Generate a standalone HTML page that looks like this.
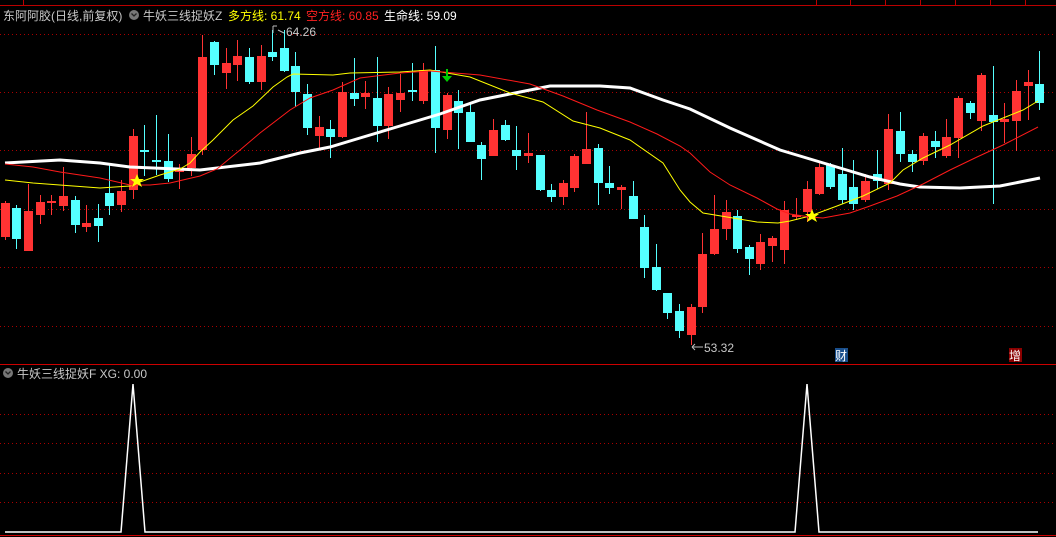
<!DOCTYPE html>
<html><head><meta charset="utf-8"><style>
html,body{margin:0;padding:0;background:#000;width:1056px;height:537px;overflow:hidden}
svg{display:block}
text{font-family:"Liberation Sans","Noto Sans CJK SC",sans-serif;font-size:12px}
</style></head><body>
<svg width="1056" height="537" viewBox="0 0 1056 537" xmlns="http://www.w3.org/2000/svg">
<rect width="1056" height="537" fill="#000"/>
<path d="M0 5.5H1056 M23.5 0V5 M816.5 0V5 M850.5 0V5 M885.5 0V5 M920.5 0V5 M955.5 0V5 M990.5 0V5 M1025.5 0V5" stroke="#b00" stroke-width="1"/>
<g stroke="#a00" stroke-width="1" stroke-dasharray="1 3">
<path d="M0 34.5H1056 M0 92.5H1056 M0 150.5H1056 M0 209.5H1056 M0 267.5H1056 M0 326.5H1056"/>
<path d="M0 414.5H1056 M0 443.5H1056 M0 473.5H1056 M0 502.5H1056"/>
</g>
<text x="3" y="20" fill="#c8c8c8">东阿阿胶(日线,前复权)</text>
<circle cx="134" cy="15" r="5" fill="#777"/>
<path d="M131.5 13.5l2.5 2.5 2.5-2.5" stroke="#222" fill="none" stroke-width="1.3"/>
<text x="143" y="20" fill="#c8c8c8">牛妖三线捉妖Z</text>
<text x="228" y="20" fill="#ffff00">多方线: 61.74</text>
<text x="306" y="20" fill="#ff2020">空方线: 60.85</text>
<text x="384" y="20" fill="#fff">生命线: 59.09</text>
<g fill="#ff3333">
<path stroke="#ff3333" stroke-width="1" d="M5.5 201V240 M28.5 184V251 M40.5 195V224 M51.5 195V215 M63.5 167V211 M86.5 205V232 M121.5 180V212 M133.5 129V199 M179.5 164V189 M191.5 137V176 M202.5 35V155 M226.5 48V89 M237.5 40V81 M261.5 45V90 M319.5 116V150 M342.5 82V138 M365.5 81V109 M388.5 87V139 M400.5 74V112 M423.5 63V104 M447.5 93V139 M493.5 119V156 M528.5 133V163 M563.5 180V205 M574.5 154V192 M586.5 112V164 M621.5 185V209 M691.5 304V345 M702.5 233V313 M714.5 195V255 M726.5 200V240 M760.5 234V270 M772.5 236V262 M784.5 201V264 M796.5 198V220 M807.5 181V222 M819.5 162V195 M865.5 174V202 M888.5 114V190 M923.5 133V165 M946.5 119V158 M958.5 96V158 M981.5 73V131 M1004.5 103V143 M1016.5 80V151 M1028.5 70V120"/>
<rect x="1" y="203" width="9" height="34"/><rect x="24" y="211" width="9" height="40"/><rect x="36" y="202" width="9" height="13"/><rect x="47" y="201" width="9" height="2"/><rect x="59" y="196" width="9" height="10"/><rect x="82" y="223" width="9" height="4"/><rect x="117" y="191" width="9" height="14"/><rect x="129" y="136" width="9" height="54"/><rect x="175" y="168" width="9" height="4"/><rect x="187" y="154" width="9" height="14"/><rect x="198" y="57" width="9" height="93"/><rect x="222" y="63" width="9" height="10"/><rect x="233" y="56" width="9" height="9"/><rect x="257" y="56" width="9" height="26"/><rect x="315" y="127" width="9" height="9"/><rect x="338" y="92" width="9" height="45"/><rect x="361" y="93" width="9" height="4"/><rect x="384" y="94" width="9" height="32"/><rect x="396" y="93" width="9" height="7"/><rect x="419" y="70" width="9" height="31"/><rect x="443" y="95" width="9" height="35"/><rect x="489" y="130" width="9" height="26"/><rect x="524" y="153" width="9" height="3"/><rect x="559" y="183" width="9" height="14"/><rect x="570" y="156" width="9" height="32"/><rect x="582" y="149" width="9" height="15"/><rect x="617" y="187" width="9" height="3"/><rect x="687" y="307" width="9" height="28"/><rect x="698" y="254" width="9" height="53"/><rect x="710" y="229" width="9" height="25"/><rect x="722" y="212" width="9" height="17"/><rect x="756" y="242" width="9" height="22"/><rect x="768" y="238" width="9" height="8"/><rect x="780" y="210" width="9" height="40"/><rect x="792" y="215" width="9" height="2"/><rect x="803" y="189" width="9" height="23"/><rect x="815" y="167" width="9" height="27"/><rect x="861" y="181" width="9" height="19"/><rect x="884" y="129" width="9" height="55"/><rect x="919" y="136" width="9" height="25"/><rect x="942" y="137" width="9" height="19"/><rect x="954" y="98" width="9" height="40"/><rect x="977" y="75" width="9" height="46"/><rect x="1000" y="119" width="9" height="3"/><rect x="1012" y="91" width="9" height="30"/><rect x="1024" y="82" width="9" height="4"/>
</g>
<g fill="#55ffff">
<path stroke="#55ffff" stroke-width="1" d="M16.5 205V249 M75.5 196V233 M98.5 204V242 M109.5 163V215 M144.5 125V176 M156.5 115V175 M168.5 134V182 M214.5 41V75 M249.5 48V84 M272.5 30V61 M284.5 30V72 M295.5 52V107 M307.5 84V135 M330.5 120V158 M354.5 58V106 M377.5 57V142 M412.5 63V101 M435.5 46V153 M458.5 90V149 M470.5 104V142 M481.5 142V180 M505.5 120V141 M516.5 126V170 M540.5 155V191 M551.5 184V202 M598.5 144V205 M609.5 166V194 M633.5 181V219 M644.5 215V278 M656.5 244V291 M667.5 293V319 M679.5 304V338 M737.5 210V253 M749.5 245V275 M830.5 163V189 M842.5 148V204 M853.5 160V210 M877.5 150V189 M900.5 112V162 M912.5 150V172 M935.5 131V158 M970.5 101V119 M993.5 66V204 M1039.5 51V110"/>
<rect x="12" y="208" width="9" height="31"/><rect x="71" y="200" width="9" height="25"/><rect x="94" y="218" width="9" height="8"/><rect x="105" y="193" width="9" height="13"/><rect x="140" y="150" width="9" height="2"/><rect x="152" y="160" width="9" height="2"/><rect x="164" y="161" width="9" height="18"/><rect x="210" y="42" width="9" height="23"/><rect x="245" y="57" width="9" height="25"/><rect x="268" y="52" width="9" height="5"/><rect x="280" y="48" width="9" height="23"/><rect x="291" y="66" width="9" height="26"/><rect x="303" y="94" width="9" height="34"/><rect x="326" y="129" width="9" height="8"/><rect x="350" y="93" width="9" height="6"/><rect x="373" y="98" width="9" height="28"/><rect x="408" y="90" width="9" height="2"/><rect x="431" y="70" width="9" height="58"/><rect x="454" y="101" width="9" height="12"/><rect x="466" y="112" width="9" height="30"/><rect x="477" y="145" width="9" height="14"/><rect x="501" y="125" width="9" height="15"/><rect x="512" y="150" width="9" height="6"/><rect x="536" y="155" width="9" height="35"/><rect x="547" y="190" width="9" height="7"/><rect x="594" y="148" width="9" height="35"/><rect x="605" y="183" width="9" height="5"/><rect x="629" y="196" width="9" height="23"/><rect x="640" y="227" width="9" height="41"/><rect x="652" y="267" width="9" height="23"/><rect x="663" y="293" width="9" height="20"/><rect x="675" y="311" width="9" height="20"/><rect x="733" y="216" width="9" height="33"/><rect x="745" y="247" width="9" height="12"/><rect x="826" y="165" width="9" height="22"/><rect x="838" y="174" width="9" height="26"/><rect x="849" y="187" width="9" height="17"/><rect x="873" y="174" width="9" height="7"/><rect x="896" y="131" width="9" height="23"/><rect x="908" y="154" width="9" height="8"/><rect x="931" y="141" width="9" height="6"/><rect x="966" y="103" width="9" height="10"/><rect x="989" y="115" width="9" height="7"/><rect x="1035" y="84" width="9" height="19"/>
</g>
<polyline fill="none" stroke="#fff" stroke-width="3" points="5,163 60,160 100,163 130,167 200,170 260,163 300,153 330,147 360,138 400,126 440,114 480,100 520,92 550,86 600,86 630,88 663,100 690,109 730,128 780,150 830,165 870,177 900,184 920,187 960,188 1000,186 1040,178"/>
<polyline fill="none" stroke="#ffff00" stroke-width="1" points="5,180 33,183 100,188 130,186 140,182 160,175 180,169 190,163 200,152 213,140 233,120 253,106 273,87 287,77 293,74 333,75 350,73 400,72 430,70 447,73 470,77 510,93 543,102 573,121 600,128 630,140 663,163 680,190 690,202 703,213 757,222 778,223 790,221 810,216 837,206 863,196 890,183 903,170 923,158 950,145 983,126 1023,110 1038,101"/>
<polyline fill="none" stroke="#ff1a1a" stroke-width="1" points="5,164 33,167 60,172 100,178 130,185 150,185 170,183 200,176 217,169 240,150 260,133 290,110 310,98 333,90 360,78 400,73 430,71 480,75 530,84 563,96 597,110 630,122 657,134 680,146 690,153 710,172 730,185 757,198 777,209 790,214 810,217 823,218 850,213 870,206 897,196 923,184 950,170 977,157 1003,145 1038,127"/>
<polygon fill="#ffff00" points="137,174 139,179 144,179 140,182 142,187 137,184 132,187 134,182 130,179 135,179"/>
<polygon fill="#ffff00" points="812,209 814,214 819,214 815,217 817,222 812,219 807,222 809,217 805,214 810,214"/>
<path d="M447 69V77" stroke="#00cc00" stroke-width="2"/>
<polygon fill="#00cc00" points="442,76 452,76 447,82"/>
<path d="M273 26V33 M273 26h4 M278 30l6 3" stroke="#bbb" stroke-width="1" fill="none"/>
<text x="286" y="36" fill="#c8c8c8">64.26</text>
<path d="M692 347H703 M692 347l3-3 M692 347l3 3" stroke="#bbb" stroke-width="1" fill="none"/>
<text x="704" y="352" fill="#c8c8c8">53.32</text>
<rect x="835" y="348" width="13" height="14" fill="#1a4f8c"/>
<text x="835" y="360" fill="#fff">财</text>
<rect x="1009" y="348" width="13" height="14" fill="#8b0000"/>
<text x="1009" y="360" fill="#fff">增</text>
<path d="M0 364.5H1056 M0 535.5H1056" stroke="#c00" stroke-width="1"/>
<circle cx="8" cy="373" r="5" fill="#777"/>
<path d="M5.5 371.5l2.5 2.5 2.5-2.5" stroke="#222" fill="none" stroke-width="1.3"/>
<text x="17" y="378" fill="#c8c8c8">牛妖三线捉妖F  XG: 0.00</text>
<polyline fill="none" stroke="#fff" stroke-width="1.5" points="5,532 121,532 133,384 145,532 795,532 807,384 819,532 1038,532"/>
</svg>
</body></html>
